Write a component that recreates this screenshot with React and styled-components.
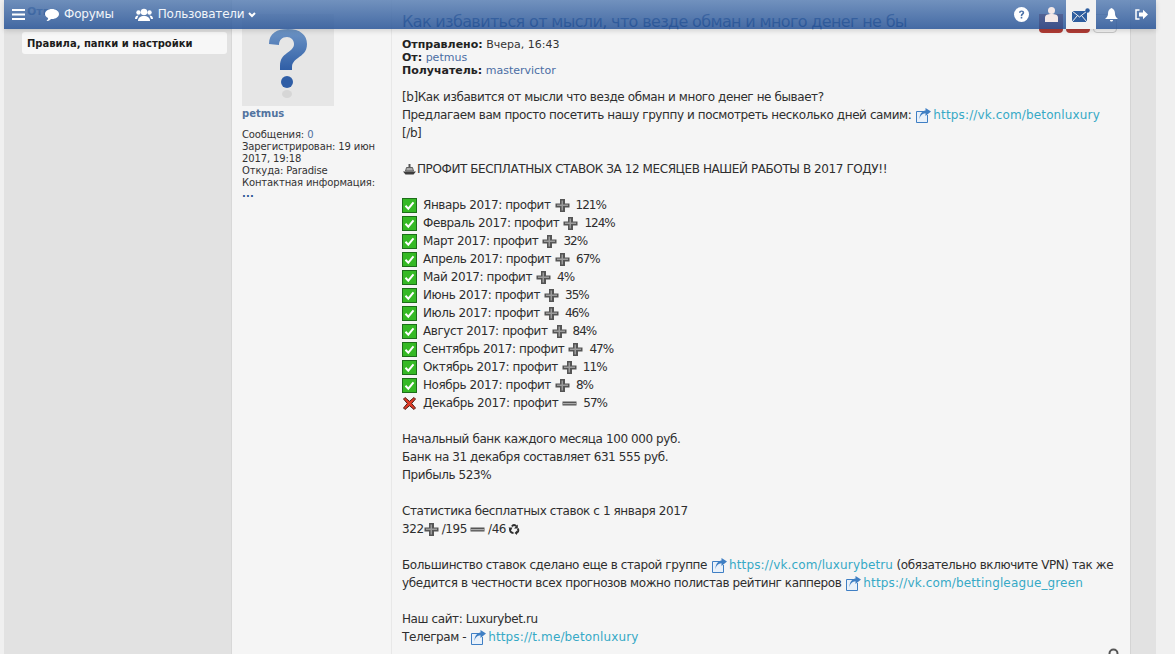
import React from "react";
import styled, { createGlobalStyle } from "styled-components";

const Global = createGlobalStyle`
  html, body { margin: 0; padding: 0; background: #f0f0f0; overflow: hidden; }
  body { font-family: "DejaVu Sans", Verdana, sans-serif; color: #333; }
  * { box-sizing: border-box; }
`;

const Page = styled.div`
  position: relative;
  width: 1175px;
  height: 654px;
  overflow: hidden;
  padding-left: 4px;
`;

const Shell = styled.div`
  display: grid;
  grid-template-columns: 227px 900px 25px;
  width: 1152px;
  height: 654px;
  background: #e2e2e2;
`;

const Sidebar = styled.aside`
  padding: 5px 4px 0 18px;
`;

const SideHeading = styled.div`
  height: 27px;
  padding-left: 5px;
  font: bold 11px/14px "DejaVu Sans", Verdana, sans-serif;
  color: #2d568f;
`;

const SideItem = styled.div`
  height: 22px;
  padding-left: 5px;
  background: #f7f7f7;
  border-radius: 3px;
  font: bold 10px/24px "DejaVu Sans", Verdana, sans-serif;
  color: #1c1c1c;
`;

const Post = styled.main`
  position: relative;
  background: #f5f5f5;
  border-left: 1px solid #d8d8d8;
  border-right: 1px solid #d4d4d4;
  display: grid;
  grid-template-columns: 160px 1fr;
  overflow: hidden;
`;

const Author = styled.div`
  padding: 14px 10px 0 10px;
  border-right: 1px solid #e8e8e8;
  font: 10px/12px "DejaVu Sans", Verdana, sans-serif;
  letter-spacing: -0.13px;
  color: #333;
`;

const Avatar = styled.div`
  width: 92px;
  height: 92px;
  background: #e6e6e6;
`;

const AuthorName = styled.div`
  margin-top: 1px;
  font: bold 10px/13px "DejaVu Sans", Verdana, sans-serif;
  letter-spacing: 0;
  color: #52739f;
`;

const Stats = styled.div`
  margin-top: 9px;
`;

const Count = styled.span`
  color: #4c6f9f;
`;

const Dots = styled.div`
  color: #2e5596;
  font-weight: bold;
  line-height: 9px;
  letter-spacing: 0.2px;
`;

const Body = styled.div`
  padding: 8px 10px 0 10px;
  min-width: 0;
`;

const TitleRow = styled.div`
  display: flex;
  justify-content: space-between;
  height: 30px;
`;

const Title = styled.h2`
  margin: 0;
  font: 500 16px/28px "DejaVu Sans", Verdana, sans-serif;
  letter-spacing: -0.64px;
  color: #1f4f8f;
  white-space: nowrap;
`;

const Actions = styled.div`
  display: flex;
  gap: 3px;
  margin-right: 3px;
  margin-top: 6px;
`;

const ActionButton = styled.div`
  width: 24px;
  height: 19px;
  border-radius: 0 0 4px 4px;
  background: ${(p) => (p.$outline ? "transparent" : "#b23c36")};
  border: ${(p) => (p.$outline ? "1px solid #c8c8c8" : "0")};
`;

const Meta = styled.div`
  font: 11px/13px "DejaVu Sans", Verdana, sans-serif;
  color: #333;
`;

const MetaRow = styled.div`
  white-space: nowrap;
`;

const MetaLabel = styled.b`
  color: #222;
`;

const NameLink = styled.span`
  color: #4a6da4;
`;

const Content = styled.div`
  margin-top: 11px;
  font: 12px/18px "DejaVu Sans", Verdana, sans-serif;
  color: #2e2e2e;
  letter-spacing: -0.41px;
`;

const Line = styled.div`
  min-height: 18px;
  white-space: nowrap;
  display: flex;
  align-items: center;
`;

const Inline = styled.span`
  white-space: pre;
`;

const Value = styled.span`
  letter-spacing: -1px;
`;

const Url = styled.span`
  color: #36a9c6;
  letter-spacing: 0.14px;
`;

const IconSlot = styled.svg`
  flex: none;
  display: block;
  margin: ${(p) => p.$margin || "0"};
`;

const ScrollMark = styled.svg`
  position: absolute;
  right: 11px;
  bottom: -5px;
`;

const NavBar = styled.header`
  position: absolute;
  top: 0;
  left: 4px;
  width: 1152px;
  height: 29px;
  display: flex;
  align-items: stretch;
  background: linear-gradient(to bottom, rgba(90, 128, 180, 0.85), rgba(38, 82, 150, 0.85));
  box-shadow: 0 2px 5px rgba(0, 0, 0, 0.14);
  color: #fff;
  font: 12px/29px "DejaVu Sans", Verdana, sans-serif;
`;

const NavLeft = styled.nav`
  display: flex;
  align-items: center;
  padding-left: 8px;
  flex: 1;
`;

const NavItem = styled.div`
  display: flex;
  align-items: center;
  gap: ${(p) => p.$gap || "5px"};
  margin-right: ${(p) => p.$right || "0"};
  color: #f2f5fa;
  letter-spacing: -0.2px;
`;

const NavRight = styled.div`
  display: flex;
  align-items: stretch;
`;

const NavIcon = styled.div`
  width: 30px;
  display: flex;
  align-items: center;
  justify-content: center;
  background: ${(p) => (p.$active ? "#f2f2f2" : "transparent")};
`;

const Check = () => (
  <IconSlot width="15" height="15" viewBox="0 0 15 15" $margin="0 6px 0 0">
    <rect x=".5" y=".5" width="14" height="14" fill="#35b925" stroke="#1d6e1a" />
    <path d="M3.500 7.800 6.300 10.700 11.500 4.300" fill="none" stroke="#fff" strokeWidth="2" />
  </IconSlot>
);

const Cross = () => (
  <IconSlot width="15" height="15" viewBox="0 0 15 15" $margin="0 6px 0 0">
    <path d="M1.500 3 3 1.500 7.500 5.300 12 1.500 13.500 3 9.700 7.500 13.500 12 12 13.500 7.500 9.700 3 13.500 1.500 12 5.300 7.500Z" fill="#e03a26" stroke="#4e2018" strokeWidth="1" />
  </IconSlot>
);

const Plus = ({ m = "0 6px 0 4px" }) => (
  <IconSlot width="15" height="15" viewBox="0 0 15 15" $margin={m}>
    <path d="M5 1h5v4.500h4.500v4H10V14H5V9.500H.5v-4H5z" fill="#555" />
    <path d="M6.500 2.500h1.500v4h5v1.500H8v4.500H6.500V8H2V6.500h4.500z" fill="#9c9c9c" />
  </IconSlot>
);

const Minus = ({ m = "0 6px 0 4px" }) => (
  <IconSlot width="15" height="15" viewBox="0 0 15 15" $margin={m}>
    <rect x=".5" y="5.500" width="14" height="4" fill="#555" />
    <rect x="1" y="7" width="13" height="1.200" fill="#ababab" />
  </IconSlot>
);

const Ship = () => (
  <IconSlot width="15" height="15" viewBox="0 0 15 15" $margin="0 0 0 0">
    <path d="M6.500 2h2v3h-2z" fill="#555" />
    <path d="M4.500 5.500h6l1 3.500h-8z" fill="#aaa" stroke="#444" strokeWidth=".8" />
    <path d="M1 9.500h13l-2.500 3h-8z" fill="#3c3c3c" />
  </IconSlot>
);

const Recycle = () => (
  <IconSlot width="12" height="12" viewBox="0 0 12 12" $margin="0 0 0 2px">
    <path d="M4 3.500C5 1.500 7 1.500 8.200 3.300M9.800 5.500C11 7.500 10 10 8 10M5.500 10C3 10 1.200 8 2.300 5.500" fill="none" stroke="#2f2f2f" strokeWidth="2" />
    <path d="M9.800 1.500V5.500H6zM9 7.500l-2.500 2.500 2.500 2zM.5 4.500h4l-1.800 3.500z" fill="#2f2f2f" />
  </IconSlot>
);

const External = () => (
  <IconSlot width="15" height="15" viewBox="0 0 15 15" $margin="0 2px 0 5px">
    <path d="M8 3.500H.5v11h11V7" fill="#e9f1fa" stroke="#3f7fc4" />
    <path d="M3.500 11.500C4 7.500 6.500 5.500 9.500 5.300V8L15 3.500 9.500 0v2.500C6 3 3.200 6.500 3.500 11.500Z" fill="#3f7fc4" />
  </IconSlot>
);

const Link = ({ href }) => (
  <>
    <External />
    <Url>{href}</Url>
  </>
);

const months = [
  ["Январь 2017: профит", "121%"],
  ["Февраль 2017: профит", "124%"],
  ["Март 2017: профит", "32%"],
  ["Апрель 2017: профит", "67%"],
  ["Май 2017: профит", "4%"],
  ["Июнь 2017: профит", "35%"],
  ["Июль 2017: профит", "46%"],
  ["Август 2017: профит", "84%"],
  ["Сентябрь 2017: профит", "47%"],
  ["Октябрь 2017: профит", "11%"],
  ["Ноябрь 2017: профит", "8%"],
];

export default function App() {
  return (
    <Page>
      <Global />
      <Shell>
        <Sidebar>
          <SideHeading>Отпр</SideHeading>
          <SideItem>Правила, папки и настройки</SideItem>
        </Sidebar>
        <Post>
          <Author>
            <Avatar>
              <svg width="92" height="92" viewBox="0 0 92 92">
                <defs>
                  <linearGradient id="q" x1="0" y1="0" x2="0" y2="1">
                    <stop offset="0" stopColor="#6f96c6" />
                    <stop offset="1" stopColor="#2f5ea6" />
                  </linearGradient>
                </defs>
                <path d="M27 30C27 19 35 15 46 15c12 0 19 6 19 15 0 8-5 11-9 14-4 3-6 5-6 9v3H38v-4c0-7 3-10 7-13 4-3 7-5 7-9 0-4-3-7-7-7-5 0-8 3-8 8Z" fill="url(#q)" />
                <circle cx="45" cy="68" r="6" fill="#2f5ea6" />
                <ellipse cx="45" cy="80" rx="5" ry="4" fill="#d6d6d6" />
              </svg>
            </Avatar>
            <AuthorName>petmus</AuthorName>
            <Stats>
              <div>Сообщения: <Count>0</Count></div>
              <div>Зарегистрирован: 19 июн 2017, 19:18</div>
              <div>Откуда: Paradise</div>
              <div>Контактная информация:</div>
              <Dots>...</Dots>
            </Stats>
          </Author>
          <Body>
            <TitleRow>
              <Title>Как избавиться от мысли, что везде обман и много денег не бы</Title>
              <Actions>
                <ActionButton />
                <ActionButton />
                <ActionButton $outline />
              </Actions>
            </TitleRow>
            <Meta>
              <MetaRow><MetaLabel>Отправлено:</MetaLabel> Вчера, 16:43</MetaRow>
              <MetaRow><MetaLabel>От:</MetaLabel> <NameLink>petmus</NameLink></MetaRow>
              <MetaRow><MetaLabel>Получатель:</MetaLabel> <NameLink>mastervictor</NameLink></MetaRow>
            </Meta>
            <Content>
              <Line>[b]Как избавится от мысли что везде обман и много денег не бывает?</Line>
              <Line>
                <Inline>Предлагаем вам просто посетить нашу группу и посмотреть несколько дней самим:</Inline>
                <Link href="https://vk.com/betonluxury" />
              </Line>
              <Line>[/b]</Line>
              <Line />
              <Line><Ship />ПРОФИТ БЕСПЛАТНЫХ СТАВОК ЗА 12 МЕСЯЦЕВ НАШЕЙ РАБОТЫ В 2017 ГОДУ!!</Line>
              <Line />
              {months.map(([label, value]) => (
                <Line key={label}>
                  <Check />
                  {label}
                  <Plus />
                  <Value>{value}</Value>
                </Line>
              ))}
              <Line>
                <Cross />
                Декабрь 2017: профит
                <Minus />
                <Value>57%</Value>
              </Line>
              <Line />
              <Line>Начальный банк каждого месяца 100 000 руб.</Line>
              <Line>Банк на 31 декабря составляет 631 555 руб.</Line>
              <Line>Прибыль 523%</Line>
              <Line />
              <Line>Статистика бесплатных ставок с 1 января 2017</Line>
              <Line>
                322
                <Plus m="0 3px 0 0" />
                <Inline>/195</Inline>
                <Minus m="0 3px 0 3px" />
                <Inline>/46</Inline>
                <Recycle />
              </Line>
              <Line />
              <Line>
                <Inline>Большинство ставок сделано еще в старой группе</Inline>
                <Link href="https://vk.com/luxurybetru" />
                <Inline> (обязательно включите VPN) так же</Inline>
              </Line>
              <Line>
                <Inline>убедится в честности всех прогнозов можно полистав рейтинг капперов</Inline>
                <Link href="https://vk.com/bettingleague_green" />
              </Line>
              <Line />
              <Line>Наш сайт: Luxurybet.ru</Line>
              <Line>
                <Inline>Телеграм -</Inline>
                <Link href="https://t.me/betonluxury" />
              </Line>
            </Content>
          </Body>
          <ScrollMark width="11" height="11" viewBox="0 0 11 11">
            <circle cx="5.500" cy="5.500" r="4" fill="none" stroke="#555" strokeWidth="2" />
          </ScrollMark>
        </Post>
        <div />
      </Shell>
      <NavBar>
        <NavLeft>
          <NavItem $right="20px">
            <svg width="13" height="11" viewBox="0 0 13 11" fill="#fff"><path d="M0 0h13v2H0zM0 4.500h13v2H0zM0 9h13v2H0z" /></svg>
          </NavItem>
          <NavItem $right="21px">
            <svg width="14" height="12" viewBox="0 0 14 12" fill="#fff"><path d="M7 0c3.900 0 7 2.200 7 5s-3.100 5-7 5l-1-.1C5 11 3.500 12 1.500 12c1-.9 1.700-2 1.600-3C1.200 8.100 0 6.600 0 5c0-2.800 3.100-5 7-5Z" /></svg>
            Форумы
          </NavItem>
          <NavItem>
            <svg width="18" height="13" viewBox="0 0 18 13" fill="#fff"><circle cx="9" cy="4" r="3.200" /><path d="M3 13c0-3.500 2.500-5 6-5s6 1.500 6 5z" /><circle cx="3.500" cy="4.500" r="2.200" /><circle cx="14.500" cy="4.500" r="2.200" /><path d="M0 11c0-2.500 1.300-3.500 3.500-3.500L2 11zM18 11c0-2.500-1.300-3.500-3.500-3.500L16 11z" /></svg>
            Пользователи
            <svg width="8" height="6" viewBox="0 0 8 6" fill="none" stroke="#fff" strokeWidth="2" style={{ marginLeft: -1 }}><path d="M1 1l3 3 3-3" /></svg>
          </NavItem>
        </NavLeft>
        <NavRight>
          <NavIcon>
            <svg width="15" height="15" viewBox="0 0 15 15"><circle cx="7.500" cy="7.500" r="7.500" fill="#fff" /><path d="M5 5.800C5 4.300 6.200 3.500 7.600 3.500 9 3.500 10.200 4.400 10.200 5.700c0 1.800-2 1.800-2 3.300H6.700c0-2.300 1.900-2.400 1.900-3.400 0-.5-.4-.8-1-.8-.6 0-1 .3-1.100 1z" fill="#4c72a8" /><rect x="6.700" y="9.800" width="1.600" height="1.700" fill="#4c72a8" /></svg>
          </NavIcon>
          <NavIcon>
            <svg width="13" height="15" viewBox="0 0 13 15" fill="#f4e9e8"><circle cx="6.500" cy="3.500" r="3.500" /><path d="M0 15V10.500C0 8 2.500 7 6.500 7S13 8 13 10.500V15z" /></svg>
          </NavIcon>
          <NavIcon $active>
            <svg width="18" height="14" viewBox="0 0 18 14"><rect x="0" y="3" width="15" height="11" fill="#2e5e9f" /><path d="M0 3l7.500 6L15 3M0 14l5.500-6.500M15 14l-5.500-6.500" fill="none" stroke="#f2f2f2" strokeWidth="1" /><circle cx="15.500" cy="2.500" r="2.200" fill="#2e5e9f" /></svg>
          </NavIcon>
          <NavIcon>
            <svg width="13" height="14" viewBox="0 0 13 14" fill="#fff"><path d="M6.500 0C4 1 3 3 3 5.500c0 2.500-1 3.500-3 5.500h13c-2-2-3-3-3-5.500C10 3 9 1 6.500 0ZM5 12h3c0 2-3 2-3 0z" /></svg>
          </NavIcon>
          <NavIcon>
            <svg width="13" height="11" viewBox="0 0 13 11"><path d="M4.500 1H1v9h3.500" fill="none" stroke="#fff" strokeWidth="1.500" /><path d="M4 3.500h4V.8l5 4.700-5 4.700V7.500H4z" fill="#fff" /></svg>
          </NavIcon>
        </NavRight>
      </NavBar>
    </Page>
  );
}
